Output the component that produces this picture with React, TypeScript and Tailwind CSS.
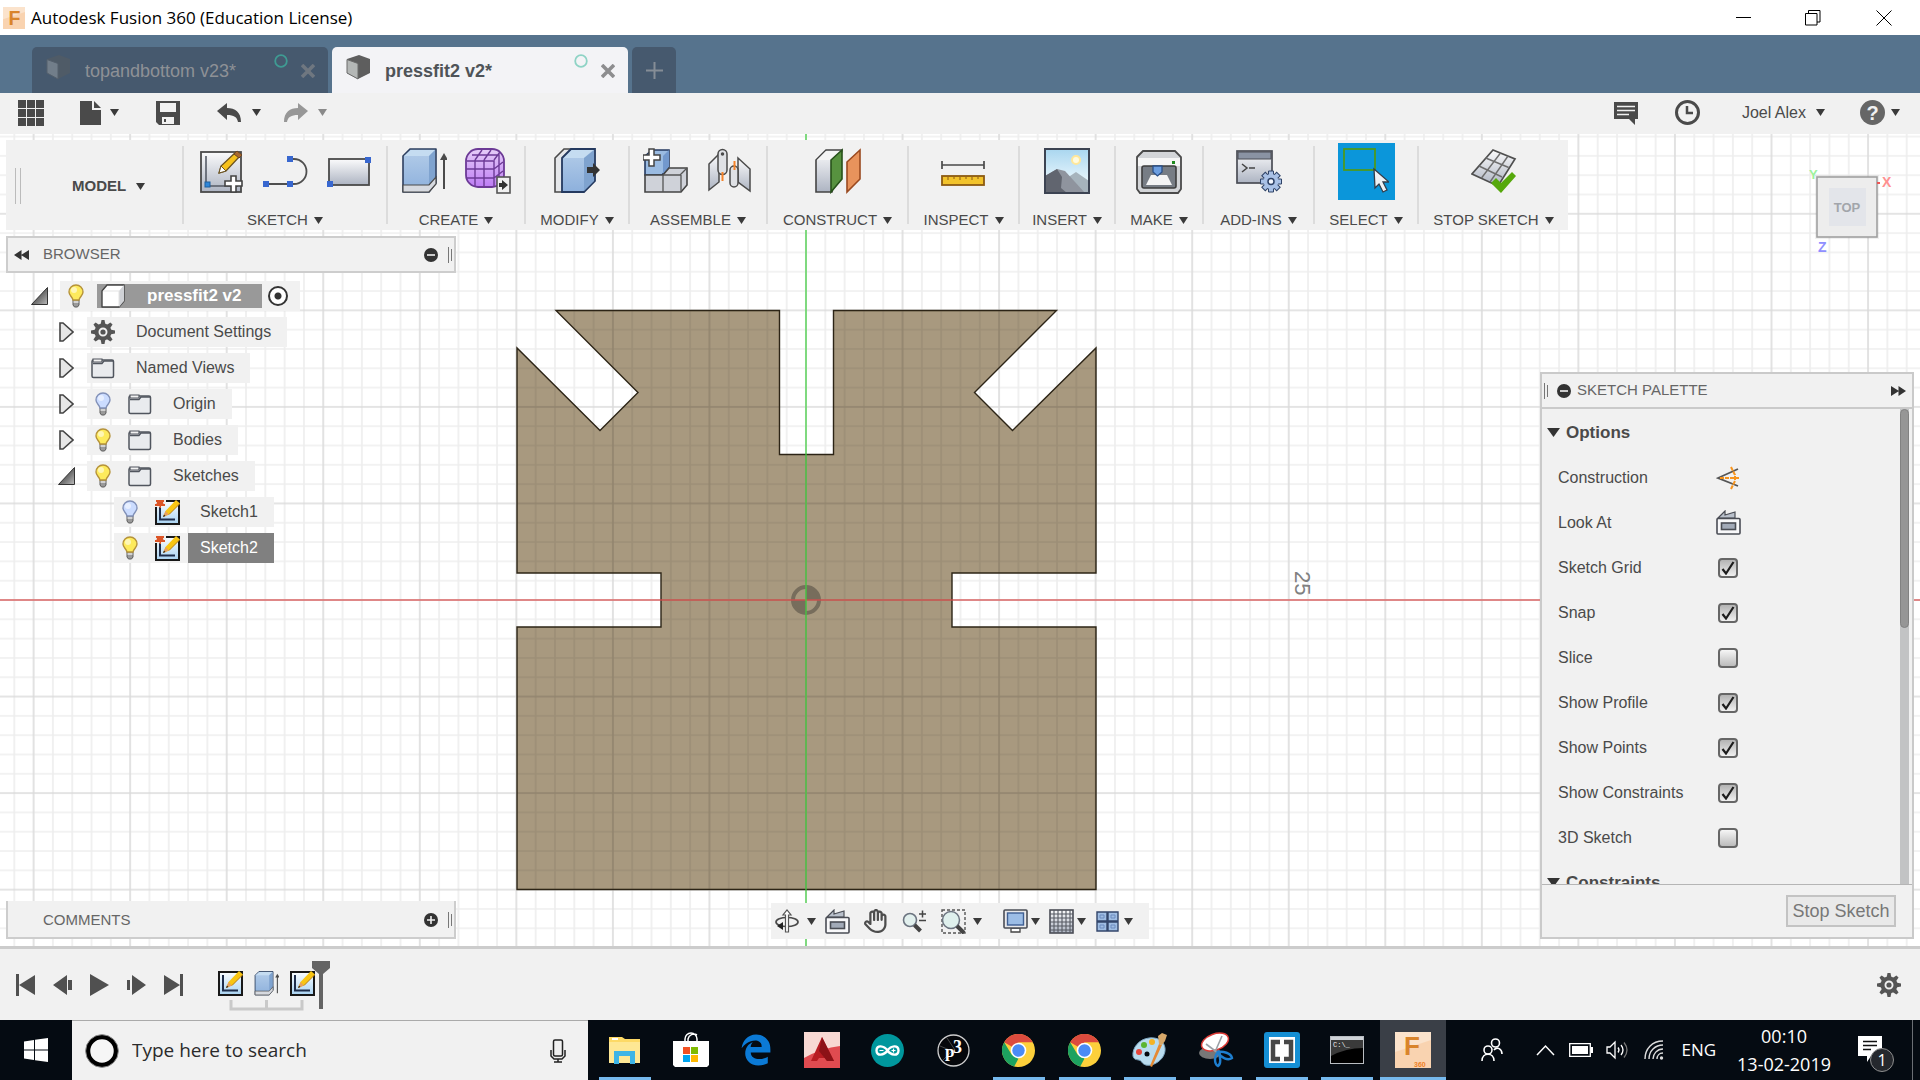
import React, { useState } from 'react';
import { FaEdgeLegacy, FaRegHand } from 'react-icons/fa6';

const INK = '#4a4a4a';

/* ---------- small shared pieces ---------- */

function Caret({ className = 'text-[#3a3a3a]' }: { className?: string }) {
  return (
    <svg width="9" height="7" viewBox="0 0 9 7" className={`shrink-0 ${className}`}>
      <path d="M0 0h9L4.500 7z" fill="currentColor" />
    </svg>
  );
}

function Gear({ size = 24 }: { size?: number }) {
  const teeth = [0, 45, 90, 135, 180, 225, 270, 315];
  return (
    <svg width={size} height={size} viewBox="0 0 24 24">
      {teeth.map((a) => (
        <path key={a} d="M9.500 5 10.500 0h3l1 5z" fill="#555" transform={`rotate(${a} 12 12)`} />
      ))}
      <circle cx="12" cy="12" r="6.500" fill="#f1f1f1" stroke="#555" strokeWidth="4" />
      <circle cx="12" cy="12" r="2.600" fill="#555" />
    </svg>
  );
}

function Bulb({ on }: { on: boolean }) {
  return (
    <svg width="18" height="24" viewBox="0 0 18 24">
      <path d="M6 15h6v6l-1.500 2h-3L6 21z" fill="#9a9a9a" stroke="#5d5d5d" />
      <path d="M6.500 18h5" stroke="#e4e4e4" strokeWidth="1.500" />
      <path
        d="M9 1a7 7 0 0 0-7 7c0 3.500 3.500 5 4 8h6c.5-3 4-4.500 4-8a7 7 0 0 0-7-7z"
        fill={on ? '#fdea5c' : '#cbdcff'}
        stroke={on ? '#b5923a' : '#8291b8'}
        strokeWidth="1.400"
      />
      <ellipse cx="7" cy="6" rx="3" ry="3" fill="#fff" opacity=".55" />
    </svg>
  );
}

function Folder() {
  return (
    <svg width="24" height="22" viewBox="0 0 24 22">
      <rect x="1" y="3" width="21.500" height="17.500" rx="1.500" fill="#e9ebee" stroke="#50555e" strokeWidth="1.500" />
      <path d="M2 6.500h9l2-2.500H22" fill="none" stroke="#50555e" strokeWidth="1.300" />
      <path d="M2 2h9v3H2z" fill="#f1f1f1" stroke="#50555e" strokeWidth="1.200" />
    </svg>
  );
}

function CubeIcon() {
  return (
    <svg width="24" height="24" viewBox="0 0 24 24">
      <path d="M1 7 6 1h17v16l-5 6H1z" fill="#fff" stroke="#444" strokeWidth="1.400" strokeLinejoin="round" />
      <path d="M18 7 23 1v16l-5 6z" fill="#d0d2d6" />
      <path d="M2 7h16v15" fill="none" stroke="#e3e3e3" />
    </svg>
  );
}

function SketchIcon({ pinned = false }: { pinned?: boolean }) {
  return (
    <svg width="25" height="25" viewBox="0 0 25 25">
      <rect x="1" y="1" width="23" height="23" fill="url(#sky)" stroke="#181818" strokeWidth="2" />
      <path d="M5 4v15.500h15" fill="none" stroke="#1e2d4a" strokeWidth="2" />
      <path d="m8 17 2.500-6L21 0l4 3.500L14 14.500z" fill="#f8c513" />
      <path d="m8 17 2.500-6 3.500 3.500z" fill="#e7a15e" />
      <path d="m8 17 1-2.500 1.500 1.500z" fill="#222" />
      <path d="M14 14.500 25 3.500" stroke="#b77a10" />
      {pinned && (
        <>
          <path d="M0 0h11v7H0z" fill="#f1f1f1" />
          <path d="M1 0h8v2H8l.5 2H10v2H6v2H4.500V6H0V4h1.500L2 2H1z" fill="#dc5527" />
        </>
      )}
    </svg>
  );
}

function ExtrudeIcon({ size = 46 }: { size?: number }) {
  return (
    <svg width={size} height={size} viewBox="0 0 46 46">
      <path d="M2 8 9 1h26v34l-7 9H2z" fill="url(#steel)" stroke="#2d3f5f" strokeWidth="1.600" strokeLinejoin="round" />
      <path d="M3 8h25l6-6H10z" fill="#c5dcf1" />
      <path d="M28 8 34 2v32l-6 8z" fill="#7fa3cf" />
      <path d="M2 37h26l7-8v7l-7 8H2z" fill="#d7dae0" stroke="#4a4a4a" strokeWidth="1.200" />
      <path d="M43 9v32" stroke={INK} strokeWidth="2" />
      <path d="m39 12 4-7 4 7z" fill={INK} />
    </svg>
  );
}

function LookAtIcon() {
  return (
    <svg width="25" height="25" viewBox="0 0 25 25">
      <path d="m2 8 7-7v4l10-3v6z" fill="#b9c0cb" stroke="#4a4d55" strokeWidth="1.200" />
      <rect x="1" y="8.500" width="23" height="15.500" rx="1" fill="#f8f8fa" stroke="#4a4d55" strokeWidth="1.600" />
      <rect x="5.500" y="13" width="14" height="6.500" fill="#a2aab8" stroke="#4a4d55" strokeWidth="1.600" />
    </svg>
  );
}

function DoubleArrow({ flip = false }: { flip?: boolean }) {
  return (
    <svg width="15" height="10" viewBox="0 0 15 10" className={flip ? 'rotate-180' : ''}>
      <path d="M0 5 7.500 0v10zM7 5l8-5v10z" fill="#333" />
    </svg>
  );
}

function RoundSign({ plus = false }: { plus?: boolean }) {
  return (
    <svg width="14" height="14" viewBox="0 0 14 14">
      <circle cx="7" cy="7" r="7" fill="#333" />
      <path d={plus ? 'M3 7h8M7 3v8' : 'M3 7h8'} stroke="#f1f1f1" strokeWidth="1.600" />
    </svg>
  );
}

function Grip() {
  return (
    <span className="flex items-center gap-0.5">
      <span className="h-4 w-px bg-[#777]" />
      <span className="h-3 w-px bg-[#777]" />
    </span>
  );
}

function FusionLogo({ size, caption }: { size: number; caption?: boolean }) {
  return (
    <svg width={size} height={size} viewBox="0 0 36 36">
      <rect width="36" height="36" fill="#fbe3cc" />
      <path d="M0 20 36 8v28H0z" fill="#f9d3b0" />
      <text x="9" y={caption ? 23 : 29} fontFamily="Liberation Sans" fontWeight="bold" fontSize={caption ? 26 : 32} fill="#d9842b">F</text>
      {caption && (
        <text x="19" y="35" fontFamily="Liberation Sans" fontSize="7" fontWeight="bold" fill="#ee8127">360</text>
      )}
    </svg>
  );
}

/* ---------- title bar and document tabs ---------- */

function TitleBar() {
  return (
    <header className="flex h-[35px] shrink-0 items-center bg-white pl-[3px] text-black">
      <FusionLogo size={22} />
      <h1 className="ml-[6px] font-['Open_Sans',sans-serif] text-[17px]">Autodesk Fusion 360 (Education License)</h1>
      <div className="ml-auto flex">
        <button aria-label="Minimise" className="flex h-8 w-[69px] items-center justify-center">
          <svg width="16" height="16" viewBox="0 0 16 16"><path d="M0 7.500h15" stroke="#000" /></svg>
        </button>
        <button aria-label="Restore" className="flex h-8 w-[69px] items-center justify-center">
          <svg width="16" height="16" viewBox="0 0 16 16" fill="none" stroke="#000">
            <path d="M.5 3.500h11.500v11.500H.5zM3.500 3.500V.5h11.500v11.500h-3" />
          </svg>
        </button>
        <button aria-label="Close" className="flex h-8 w-[73px] items-center justify-center">
          <svg width="16" height="16" viewBox="0 0 16 16"><path d="m.5.5 15 15m0-15-15 15" stroke="#000" /></svg>
        </button>
      </div>
    </header>
  );
}

function DocTab({ name, active = false }: { name: string; active?: boolean }) {
  return (
    <div
      className={`flex h-[46px] w-[296px] items-center rounded-t-[5px] pl-[14px] pr-[13px] pt-[2px] ${
        active ? 'bg-[#f3f3f6] text-[#4f5358]' : 'bg-[#46596e] text-[#8e9196]'
      }`}
    >
      <svg width="25" height="25" viewBox="0 0 25 25" className={`mb-2 ${active ? '' : 'opacity-40'}`}>
        <path d="M1 4 13 0l11 4v14l-12 6L1 18z" fill="#5e5e5e" />
        <path d="M1 4.500 12 8.500V24L1 18z" fill="#b4b7b6" stroke="#6a6a6a" />
      </svg>
      <button className={`ml-[14px] text-[18px] leading-6 ${active ? 'font-bold' : ''}`}>{name}</button>
      <svg width="14" height="14" viewBox="0 0 14 14" className="mb-5 ml-auto">
        <circle cx="7" cy="7" r="5.800" fill="none" stroke={active ? '#8ed3c5' : '#3f9b93'} strokeWidth="1.800" />
      </svg>
      <button aria-label={`Close ${name}`} className="ml-[13px]">
        <svg width="14" height="14" viewBox="0 0 14 14">
          <path d="m1 1 12 12m0-12L1 13" stroke={active ? '#8d8d8f' : '#6f7780'} strokeWidth="3.600" />
        </svg>
      </button>
    </div>
  );
}

function TabBar() {
  return (
    <nav className="flex h-[58px] shrink-0 items-end gap-1 bg-[#56738d] pl-8">
      <DocTab name="topandbottom v23*" />
      <DocTab name="pressfit2 v2*" active />
      <button aria-label="New tab" className="flex h-[46px] w-11 items-center justify-center rounded-t-[5px] bg-[#46596e]">
        <svg width="17" height="17" viewBox="0 0 17 17"><path d="M0 8.500h17M8.500 0v17" stroke="#858d96" strokeWidth="2" /></svg>
      </button>
    </nav>
  );
}

function UndoArrow({ flip = false }: { flip?: boolean }) {
  return (
    <svg width="25" height="22" viewBox="0 0 25 22" className={flip ? '-scale-x-100' : ''}>
      <path d="M0 9 10 1v5c8 0 14 4 14 14h-3c-1-5-4-7-11-7v5z" fill="currentColor" />
    </svg>
  );
}

function QuickBar() {
  return (
    <div className="flex h-[41px] shrink-0 items-center bg-[#f1f1f1] pb-[2px] pl-[18px] pr-[20px] text-[16px] text-[#4a4a4a]">
      <button aria-label="Data panel">
        <svg width="26" height="26" viewBox="0 0 26 26" fill={INK}>
          {[0, 9, 18].map((y) => [0, 9, 18].map((x) => <rect key={`${x}-${y}`} x={x} y={y} width="8" height="8" />))}
        </svg>
      </button>
      <button aria-label="File" className="ml-[36px] flex items-center gap-[9px]">
        <svg width="21" height="24" viewBox="0 0 21 24" fill={INK}>
          <path d="M0 0h12v9h9v15H0z" />
          <path d="M14 0l7 7h-7z" />
        </svg>
        <Caret />
      </button>
      <button aria-label="Save" className="ml-[37px]">
        <svg width="24" height="24" viewBox="0 0 24 24">
          <path d="M0 0h24v24H3l-3-3z" fill={INK} />
          <path d="M4 2h16v9H4z" fill="#f1f1f1" />
          <path d="M6 16h12v7H6z" fill="#f1f1f1" />
          <path d="M8 18h2v3H8z" fill={INK} />
        </svg>
      </button>
      <button aria-label="Undo" className="ml-[37px] flex items-center gap-[10px]">
        <UndoArrow />
        <Caret />
      </button>
      <button aria-label="Redo" className="ml-[22px] flex items-center gap-[10px] text-[#979797]">
        <UndoArrow flip />
        <Caret className="text-[#8a8a8a]" />
      </button>

      <button aria-label="Comments" className="ml-auto">
        <svg width="24" height="24" viewBox="0 0 24 24">
          <path d="M0 1h24v17h-3v6l-6-6H0z" fill={INK} />
          <path d="M3 5.500h18M3 9.500h18M3 13.500h12" stroke="#f1f1f1" strokeWidth="1.500" />
        </svg>
      </button>
      <button aria-label="Job status" className="ml-[37px]">
        <svg width="25" height="25" viewBox="0 0 25 25" fill="none" stroke={INK}>
          <circle cx="12.500" cy="12.500" r="11" strokeWidth="3" />
          <path d="M12 6v7h6" strokeWidth="2.500" />
        </svg>
      </button>
      <button className="ml-[42px] flex items-center gap-[10px]">
        Joel Alex <Caret />
      </button>
      <button aria-label="Help" className="ml-[35px] flex items-center gap-[6px]">
        <span className="flex size-[25px] items-center justify-center rounded-full bg-[#666] text-[20px] font-bold text-[#f1f1f1]">?</span>
        <Caret />
      </button>
    </div>
  );
}

/* ---------- ribbon ---------- */

const CreateSketch = () => (
  <svg width="46" height="46" viewBox="0 0 46 46">
    <rect x="3" y="4" width="40" height="40" fill="url(#silver)" stroke="#4a4a4a" strokeWidth="1.800" />
    <path d="M8 8v30h32" fill="none" stroke="#555b66" strokeWidth="1.600" />
    <rect x="7" y="34" width="5" height="5" fill="#2f86d8" stroke="#1d5f9e" />
    <path d="m21 25 2-7L38 4l4 4-14 15z" fill="#f6c11c" stroke="#6a5220" strokeWidth="1.300" />
    <path d="m21 25 2-7 5 5z" fill="#fff" stroke="#6a5220" />
    <path d="m36 6 3-3 5 4-3 3z" fill="#a9692f" stroke="#6a4423" />
    <path d="M33 28h5v5h6v5h-6v6h-5v-6h-6v-5h6z" fill="#fff" stroke="#444" strokeWidth="1.600" />
  </svg>
);

const LineTool = () => (
  <svg width="46" height="46" viewBox="0 0 46 46">
    <path d="M4 36h28a12.500 12.500 0 0 0 0-25h-4" fill="none" stroke="#4f4f4f" strokeWidth="1.800" />
    <path d="M1 33h6v6H1zM25 33h6v6h-6zM25 8h6v6h-6z" fill="#3867cf" />
  </svg>
);

const RectTool = () => (
  <svg width="46" height="46" viewBox="0 0 46 46">
    <rect x="3" y="11" width="40" height="26" fill="url(#silver)" stroke="#4a4a4a" strokeWidth="1.800" />
    <path d="M1 33h6v6H1zM39 9h6v6h-6z" fill="#3867cf" />
  </svg>
);

const FormTool = () => (
  <svg width="46" height="46" viewBox="0 0 46 46">
    <rect x="1" y="1" width="38" height="38" rx="12" fill="url(#violet)" stroke="#6c3a96" strokeWidth="1.800" />
    <path d="M2 13h27v26M10 12v26M19 12v26M1 21h28M1 30h28M10 12l7-10M19 12l7-10M29 12l6-8M7 7h27v28M29 21l9-7M29 30l9-7" fill="none" stroke="#6c3a96" strokeWidth="1.400" />
    <rect x="32" y="29" width="13" height="16" fill="#f1f1f1" stroke="#555" strokeWidth="1.600" />
    <path d="M34 35h3v-3l6 5-6 5v-3h-3z" fill="#333" />
  </svg>
);

const PressPull = () => (
  <svg width="46" height="46" viewBox="0 0 46 46">
    <path d="M1 10 10 1h10v34L8 44H1z" fill="#e5e7ea" stroke="#4a4a4a" strokeWidth="1.600" />
    <path d="m8 10 9-9h24v32L30 44H8z" fill="url(#steel)" stroke="#24395f" strokeWidth="1.800" />
    <path d="M10 10h20l9-8H18z" fill="#c5dcf1" />
    <path d="m30 10 10-8v31L30 43z" fill="#7fa3cf" />
    <path d="M33 19h6v-4l7 7-7 7v-4h-6z" fill="#333" />
  </svg>
);

const NewComponent = () => (
  <svg width="46" height="46" viewBox="0 0 46 46">
    <path d="M2 8 9 2h17v17l-7 8H2z" fill="#9abbe2" stroke="#24395f" strokeWidth="1.600" />
    <path d="M20 8 26 2v17l-6 7z" fill="#7298cd" />
    <path d="M2 27h18l6-7h18v17l-6 7H2z" fill="#cfd2d9" stroke="#444" strokeWidth="1.600" />
    <path d="M20 27v17M20 27h17l7-7M38 27v16" fill="none" stroke="#555" strokeWidth="1.300" />
    <path d="M6 1h5v6h6v5h-6v6H6v-6H0V7h6z" fill="#fff" stroke="#444" strokeWidth="1.500" />
  </svg>
);

const Joint = () => (
  <svg width="46" height="46" viewBox="0 0 46 46" stroke="#4a4a4a" strokeWidth="1.500">
    <path d="m2 16 10-10v28L2 42z" fill="url(#silver)" />
    <path d="M11 6a4 4 0 0 1 9 0v16a4 4 0 0 1-9 0z" fill="#dfe1e5" />
    <circle cx="15.500" cy="6" r="1" fill="#444" />
    <path d="m31 10 12 11v22L31 34z" fill="url(#silver)" />
    <path d="M23 22a4 4 0 0 1 8 0v13a4 4 0 0 1-8 0z" fill="#dfe1e5" />
    <path d="M15.500 24v9M27.500 13v9" stroke="#f5832a" strokeWidth="2" />
  </svg>
);

const Plane = () => (
  <svg width="46" height="46" viewBox="0 0 46 46">
    <path d="M1 12 11 2h16L17 44H1z" fill="url(#silver)" stroke="#444" strokeWidth="1.600" />
    <path d="M2 12h14L26 3H11z" fill="#f5f5f5" />
    <path d="M16 12 27 2v29L16 44z" fill="#57923f" stroke="#27521a" strokeWidth="1.600" />
    <path d="M32 14 45 2v29L32 44z" fill="#e8935c" stroke="#9a4a20" strokeWidth="1.600" />
  </svg>
);

const Measure = () => (
  <svg width="46" height="46" viewBox="0 0 46 46">
    <path d="M1 17h42M1 13v8M43 13v8" stroke="#4a4a4a" strokeWidth="1.700" fill="none" />
    <rect x="1" y="28" width="42" height="9" fill="#f2c32c" stroke="#8c5a12" strokeWidth="1.800" />
    <path d="M7 29v3M13 29v2M19 29v3M25 29v2M31 29v3M37 29v2" stroke="#8c5a12" />
  </svg>
);

const InsertImage = () => (
  <svg width="46" height="46" viewBox="0 0 46 46">
    <rect x="1" y="1" width="44" height="44" fill="url(#daylight)" />
    <circle cx="32" cy="12" r="4" fill="#fffbe0" stroke="#ffe79a" strokeWidth="2" />
    <path d="m23 30 9-6 13 9v12H23z" fill="#a6b3bc" />
    <path d="M1 28 13 21l8 2 20 22H1z" fill="#8f949e" />
    <path d="M1 28 13 21l5 8-1 11 6 5H1z" fill="#61656f" />
    <rect x="1" y="1" width="44" height="44" fill="none" stroke="#3c4352" strokeWidth="2" />
  </svg>
);

const Printer3D = () => (
  <svg width="46" height="46" viewBox="0 0 46 46">
    <path d="M1 9 7 3h32l6 6v32l-3 4H4l-3-4z" fill="#d3d5d8" stroke="#4a4a4a" strokeWidth="1.800" />
    <path d="M2 10h42v8H2z" fill="#f6f6f6" />
    <rect x="6" y="18" width="34" height="22" rx="2" fill="#777d85" stroke="#3e3e3e" strokeWidth="1.600" />
    <path d="M15 27h16l5 10H10z" fill="#f4f4f4" />
    <path d="M17 18h9v6l-4.500 4L17 24z" fill="#6c9ee0" stroke="#2c5087" strokeWidth="1.300" />
    <rect x="36" y="13" width="3" height="3" fill="#1f8b1f" />
  </svg>
);

const Scripts = () => (
  <svg width="46" height="46" viewBox="0 0 46 46">
    <rect x="1" y="3" width="35" height="32" fill="url(#silver)" stroke="#4a4d55" strokeWidth="1.700" />
    <path d="M2 4h33v7H2z" fill="#8a93a3" stroke="#4a4d55" />
    <path d="m6 16 5 4-5 4M13 20h6" fill="none" stroke="#444" strokeWidth="1.500" />
    {[0, 45, 90, 135].map((a) => (
      <path key={a} d="M32.500 23h5v21h-5z" fill="#a9c1e6" stroke="#2f4367" transform={`rotate(${a} 35 33.500)`} />
    ))}
    <circle cx="35" cy="33.500" r="7.500" fill="#a9c1e6" />
    <circle cx="35" cy="33.500" r="3" fill="#f5f8ff" stroke="#2f4367" strokeWidth="1.500" />
  </svg>
);

const SelectTool = () => (
  <span className="flex size-[57px] items-center justify-center bg-[#0b96da]">
    <svg width="46" height="46" viewBox="0 0 46 46">
      <rect x="1" y="1" width="31" height="21" fill="none" stroke="#4d9a1e" strokeWidth="1.800" />
      <path d="m31 21 1 19 4-4 4 8 4-2-4-8h6z" fill="#eef1f4" stroke="#333c48" strokeWidth="1.300" />
    </svg>
  </span>
);

const StopSketchTool = () => (
  <svg width="46" height="46" viewBox="0 0 46 46">
    <path d="M22 2 44 11 27 38 1 26z" fill="url(#silver)" stroke="#4f4f4f" strokeWidth="1.700" />
    <path d="m14.700 10 23 9.500M8 18l23 11M29.500 5 10.500 30M37 8 19 34" stroke="#6d6d6d" strokeWidth="1.400" />
    <path d="m20 35 5-5 5 5L41 24l4 4-15 17z" fill="#56a80c" />
  </svg>
);

type RibbonGroup = { label: string; width: string; tools: { name: string; icon: React.ReactNode }[] };

const ribbon: RibbonGroup[] = [
  {
    label: 'SKETCH',
    width: 'w-[204px]',
    tools: [
      { name: 'Create Sketch', icon: <CreateSketch /> },
      { name: 'Line', icon: <LineTool /> },
      { name: 'Rectangle', icon: <RectTool /> },
    ],
  },
  {
    label: 'CREATE',
    width: 'w-[138px]',
    tools: [
      { name: 'Extrude', icon: <ExtrudeIcon /> },
      { name: 'Create Form', icon: <FormTool /> },
    ],
  },
  { label: 'MODIFY', width: 'w-[104px]', tools: [{ name: 'Press Pull', icon: <PressPull /> }] },
  {
    label: 'ASSEMBLE',
    width: 'w-[138px]',
    tools: [
      { name: 'New Component', icon: <NewComponent /> },
      { name: 'Joint', icon: <Joint /> },
    ],
  },
  { label: 'CONSTRUCT', width: 'w-[141px]', tools: [{ name: 'Offset Plane', icon: <Plane /> }] },
  { label: 'INSPECT', width: 'w-[111px]', tools: [{ name: 'Measure', icon: <Measure /> }] },
  { label: 'INSERT', width: 'w-[96px]', tools: [{ name: 'Attached Canvas', icon: <InsertImage /> }] },
  { label: 'MAKE', width: 'w-[88px]', tools: [{ name: '3D Print', icon: <Printer3D /> }] },
  { label: 'ADD-INS', width: 'w-[111px]', tools: [{ name: 'Scripts', icon: <Scripts /> }] },
  { label: 'SELECT', width: 'w-[104px]', tools: [{ name: 'Select', icon: <SelectTool /> }] },
  { label: 'STOP SKETCH', width: 'w-[151px]', tools: [{ name: 'Stop Sketch', icon: <StopSketchTool /> }] },
];

function Ribbon() {
  return (
    <div className="ml-[6px] flex h-[90px] w-fit bg-[#f1f1f1] text-[15px] leading-4 text-[#4a4a4a]">
      <div className="flex w-[176px] items-center pl-[9px] pt-[2px]">
        <span className="h-9 w-1.5 border-x border-[#bbb]" />
        <button className="ml-[51px] flex items-center gap-[10px] font-bold">
          MODEL <Caret />
        </button>
      </div>
      {ribbon.map((group) => (
        <div key={group.label} className={`my-[6px] flex flex-col items-center border-l-2 border-[#dcdcdc] ${group.width}`}>
          <div className="mt-[2px] flex h-[46px] shrink-0 items-center gap-[18px]">
            {group.tools.map((tool) => (
              <button key={tool.name} aria-label={tool.name}>{tool.icon}</button>
            ))}
          </div>
          <button className="mt-[18px] flex shrink-0 items-center gap-[6px] whitespace-nowrap">
            {group.label} <Caret />
          </button>
        </div>
      ))}
    </div>
  );
}

/* ---------- browser tree ---------- */

type Node = {
  name: string;
  level: number;
  state?: 'open' | 'closed';
  bulb?: boolean;
  icon: React.ReactNode;
  root?: boolean;
  selected?: boolean;
};

const nodes: Node[] = [
  { name: 'pressfit2 v2', level: 0, state: 'open', bulb: true, icon: <CubeIcon />, root: true },
  { name: 'Document Settings', level: 1, state: 'closed', icon: <Gear /> },
  { name: 'Named Views', level: 1, state: 'closed', icon: <Folder /> },
  { name: 'Origin', level: 1, state: 'closed', bulb: false, icon: <Folder /> },
  { name: 'Bodies', level: 1, state: 'closed', bulb: true, icon: <Folder /> },
  { name: 'Sketches', level: 1, state: 'open', bulb: true, icon: <Folder /> },
  { name: 'Sketch1', level: 2, bulb: false, icon: <SketchIcon pinned /> },
  { name: 'Sketch2', level: 2, bulb: true, icon: <SketchIcon pinned />, selected: true },
];

const indent = ['pl-[25px]', 'pl-[52px]', 'pl-[79px]'];

function Expander({ state }: { state?: 'open' | 'closed' }) {
  if (!state) return <span className="w-[17px]" />;
  return (
    <button aria-label={state === 'open' ? 'Collapse' : 'Expand'} className="flex w-[17px] justify-center">
      {state === 'open' ? (
        <svg width="17" height="18" viewBox="0 0 17 18">
          <path d="M16.500.5v17H.5z" fill="url(#dusk)" stroke="#333" />
        </svg>
      ) : (
        <svg width="15" height="20" viewBox="0 0 15 20">
          <path d="M1 1h3l10 9L4 19H1z" fill="#e6e6e6" stroke="#444" strokeWidth="1.600" />
        </svg>
      )}
    </button>
  );
}

function TreeRow({ node }: { node: Node }) {
  return (
    <li className={`flex h-[30px] items-center gap-3 ${indent[node.level]}`}>
      <Expander state={node.state} />
      <div className="flex h-full items-center bg-[#f1f1f1]">
        {node.bulb !== undefined && (
          <button aria-label={`Toggle ${node.name}`} className="mr-[5px] flex w-8 justify-center">
            <Bulb on={node.bulb} />
          </button>
        )}
        {node.root ? (
          <>
            <span className="flex h-6 items-center bg-[#999] pr-[20px] text-[17px] font-bold text-white">
              <span className="mr-[18px] flex w-8 justify-center">{node.icon}</span>
              {node.name}
            </span>
            <input
              type="radio"
              name="active"
              defaultChecked
              aria-label="Activate"
              className="ml-[6px] mr-3 size-5 appearance-none rounded-full border-2 border-[#333] bg-[radial-gradient(circle,#333_3px,#fff_4px)]"
            />
          </>
        ) : (
          <>
            <span className="mr-[5px] flex w-8 justify-center">{node.icon}</span>
            <span className={`flex h-full items-center pl-3 pr-4 ${node.selected ? 'bg-[#808080] text-white' : ''}`}>
              {node.name}
            </span>
          </>
        )}
      </div>
    </li>
  );
}

function Browser() {
  return (
    <section className="mt-[6px] text-[16px] text-[#4a4a4a]">
      <div className="flex h-[37px] items-center border-2 border-[#cdcdcd] bg-[#f1f1f1] pl-[6px] pr-[2px]">
        <button aria-label="Collapse browser"><DoubleArrow /></button>
        <h2 className="ml-[14px] text-[15px] text-[#666]">BROWSER</h2>
        <button aria-label="Minimise browser" className="ml-auto mr-[10px]"><RoundSign /></button>
        <Grip />
      </div>
      <ul className="mt-2 flex flex-col gap-[6px]">
        {nodes.map((node) => <TreeRow key={node.name} node={node} />)}
      </ul>
    </section>
  );
}

function Comments() {
  return (
    <section className="mt-auto flex h-[38px] items-center border-2 border-t-0 border-[#cdcdcd] bg-[#f1f1f1] pl-[35px] pr-[2px] pt-[2px]">
      <h2 className="text-[15px] text-[#666]">COMMENTS</h2>
      <button aria-label="Expand comments" className="ml-auto mr-[10px]"><RoundSign plus /></button>
      <Grip />
    </section>
  );
}

/* ---------- navigation bar ---------- */

function NavBar() {
  return (
    <div className="flex h-9 items-center self-end bg-[#f1f1f1] pl-1 pr-4">
      <button aria-label="Orbit" className="flex items-center gap-2">
        <svg width="24" height="24" viewBox="0 0 24 24">
          <ellipse cx="12" cy="13" rx="11" ry="4.500" fill="none" stroke="#4a4a4a" strokeWidth="1.700" />
          <path d="M10.500 23V6H8l4-5 4 5h-2.500v17z" fill="#fff" stroke="#555" strokeWidth="1.200" />
          <path d="m2 17 6-4v8z" fill="#222" />
        </svg>
        <Caret />
      </button>
      <button aria-label="Look at" className="ml-[9px]"><LookAtIcon /></button>
      <button aria-label="Pan" className="ml-[14px] text-[#4d4d4d]"><FaRegHand size={24} /></button>
      <button aria-label="Zoom" className="ml-[14px]">
        <svg width="25" height="25" viewBox="0 0 25 25">
          <circle cx="8" cy="11" r="6.500" fill="#e2f0ee" stroke="#6c7480" strokeWidth="1.600" />
          <path d="m12.500 16 6 6" stroke="#444" strokeWidth="4" />
          <path d="M17 5h7M20.500 1.500v7M17 11.500h7" stroke="#444" strokeWidth="1.500" />
        </svg>
      </button>
      <button aria-label="Zoom window" className="ml-[14px] flex items-center gap-[7px]">
        <svg width="25" height="25" viewBox="0 0 25 25">
          <rect x="1" y="1" width="23" height="23" fill="none" stroke="#555" strokeWidth="1.400" strokeDasharray="3 2" />
          <circle cx="10" cy="11" r="8.500" fill="#dff0ed" stroke="#6c7480" strokeWidth="1.500" />
          <path d="m16 17 7 7" stroke="#444" strokeWidth="4" />
        </svg>
        <Caret />
      </button>
      <button aria-label="Display settings" className="ml-[21px] flex items-center gap-[3px]">
        <svg width="25" height="25" viewBox="0 0 25 25">
          <path d="M8 19h9v4H8z" fill="#fff" stroke="#444" strokeWidth="1.300" />
          <rect x="1" y="1" width="23" height="18" rx="1" fill="#e8e8ea" stroke="#4a4d55" strokeWidth="1.600" />
          <rect x="4.500" y="4" width="16" height="12" fill="#9cbde6" stroke="#3f5f93" strokeWidth="1.400" />
        </svg>
        <Caret />
      </button>
      <button aria-label="Grid and snaps" className="ml-[9px] flex items-center gap-[3px]">
        <svg width="25" height="25" viewBox="0 0 25 25">
          <rect x="1" y="1" width="23" height="23" fill="url(#silver)" stroke="#4a4d55" strokeWidth="1.600" />
          <path d="M5 1v23M9 1v23M13 1v23M17 1v23M21 1v23M1 5h23M1 9h23M1 13h23M1 17h23M1 21h23" stroke="#555962" strokeWidth="1.100" />
        </svg>
        <Caret />
      </button>
      <button aria-label="Viewports" className="ml-[10px] flex items-center gap-[5px]">
        <svg width="23" height="21" viewBox="0 0 23 21" fill="#9fbde3" stroke="#33466b" strokeWidth="1.400">
          <path d="M1 1h10v9H1zM12 1h10v9H12zM1 11h10v9H1zM12 11h10v9H12z" />
          <path d="M4 4h4v3H4zM15 4h4v3h-4zM4 14h4v3H4zM15 14h4v3h-4z" stroke="#6c8cc0" strokeWidth="1" />
        </svg>
        <Caret />
      </button>
    </div>
  );
}

/* ---------- sketch palette ---------- */

const toggles = [
  { name: 'Sketch Grid', on: true },
  { name: 'Snap', on: true },
  { name: 'Slice', on: false },
  { name: 'Show Profile', on: true },
  { name: 'Show Points', on: true },
  { name: 'Show Constraints', on: true },
  { name: '3D Sketch', on: false },
];

function PaletteHeading({ children }: { children: React.ReactNode }) {
  return (
    <h3 className="flex h-[45px] items-center gap-[6px] pl-[5px] text-[17px] font-bold">
      <svg width="13" height="9" viewBox="0 0 13 9"><path d="M0 0h13L6.500 9z" fill="#333" /></svg>
      {children}
    </h3>
  );
}

function PaletteToggle({ name, on }: { name: string; on: boolean }) {
  const [checked, setChecked] = useState(on);
  return (
    <label className="flex h-[45px] items-center pl-4">
      <span className="w-[158px]">{name}</span>
      <span className="grid w-6 place-items-center">
        <input
          type="checkbox"
          checked={checked}
          onChange={() => setChecked(!checked)}
          className="size-5 appearance-none rounded-[4px] border-2 border-[#666] bg-linear-to-b from-[#f6f6f6] to-[#bcbcbc] [grid-area:1/1] checked:from-[#b4b4b4] checked:to-[#f0f0f0]"
        />
        {checked && (
          <svg width="14" height="14" viewBox="0 0 14 14" className="pointer-events-none [grid-area:1/1]">
            <path d="m1.500 8 3.500 4.500L12.500 1" fill="none" stroke="#1c1c1c" strokeWidth="2.200" />
          </svg>
        )}
      </span>
    </label>
  );
}

function SketchPalette() {
  return (
    <section className="flex h-[567px] w-[374px] flex-col self-end justify-self-end border-2 border-[#cacaca] bg-[#f1f1f1] text-[16px] text-[#4a4a4a]">
      <div className="flex h-[35px] shrink-0 items-center border-b-2 border-[#cacaca] pl-[2px] pr-[6px]">
        <Grip />
        <button aria-label="Minimise palette" className="ml-[9px]"><RoundSign /></button>
        <h2 className="ml-[6px] text-[15px] text-[#666]">SKETCH PALETTE</h2>
        <button aria-label="Collapse palette" className="ml-auto"><DoubleArrow flip /></button>
      </div>
      <div className="flex min-h-0 flex-1">
        <div className="flex-1 overflow-hidden pt-px">
          <PaletteHeading>Options</PaletteHeading>
          <div className="flex h-[45px] items-center pl-4">
            <span className="w-[158px]">Construction</span>
            <button aria-label="Construction">
              <svg width="24" height="24" viewBox="0 0 24 24">
                <path d="M22 3 2 12l20 8" fill="none" stroke="#555" strokeWidth="1.800" />
                <path d="M4 12h20M15 1l4 8v6l-4 8" fill="none" stroke="#f7941d" strokeWidth="2" strokeDasharray="4 1" />
              </svg>
            </button>
          </div>
          <div className="flex h-[45px] items-center pl-4">
            <span className="w-[158px]">Look At</span>
            <button aria-label="Look At"><LookAtIcon /></button>
          </div>
          {toggles.map((t) => <PaletteToggle key={t.name} {...t} />)}
          <PaletteHeading>Constraints</PaletteHeading>
        </div>
        <div className="mr-[3px] w-[9px] bg-[#c2c3c4]">
          <div className="h-[46%] rounded-full border border-[#828282] bg-[#969696]" />
        </div>
      </div>
      <div className="flex h-[53px] shrink-0 items-center justify-end border-t border-[#b5b5b5] pr-4">
        <button className="h-8 w-[110px] border-2 border-[#c3c3c3] bg-[#e9e9e9] text-[18px] leading-6 text-[#777]">Stop Sketch</button>
      </div>
    </section>
  );
}

/* ---------- modelling canvas ---------- */

const PROFILE =
  'M556 310.500H779.500V454.500H833.500V310.500H1056.500L974.500 392.500 1012.500 430.500 1096 348V573H952V627H1096V889.500H517V627H661V573H517V348L600 430.500 638 392.500Z';

function ModelCanvas() {
  return (
    <svg className="absolute inset-0 size-full bg-white" viewBox="0 134 1920 812" preserveAspectRatio="xMidYMid slice">
      <defs>
        <linearGradient id="silver" x1="0" y1="0" x2="0" y2="1">
          <stop offset="0" stopColor="#fbfbfc" />
          <stop offset="1" stopColor="#adb4c2" />
        </linearGradient>
        <linearGradient id="steel" x1="0" y1="0" x2="0" y2="1">
          <stop offset="0" stopColor="#b4cde9" />
          <stop offset="1" stopColor="#8db0dc" />
        </linearGradient>
        <linearGradient id="sky" x1="0" y1="0" x2="0" y2="1">
          <stop offset="0" stopColor="#fafdff" />
          <stop offset="1" stopColor="#a9d3f2" />
        </linearGradient>
        <linearGradient id="daylight" x1="0" y1="0" x2="0" y2="1">
          <stop offset="0" stopColor="#a9d6ef" />
          <stop offset=".7" stopColor="#e4f4fc" />
        </linearGradient>
        <linearGradient id="violet" x1="0" y1="0" x2="0" y2="1">
          <stop offset="0" stopColor="#e6cdf8" />
          <stop offset="1" stopColor="#bd7cf4" />
        </linearGradient>
        <linearGradient id="dusk" x1="0" y1="0" x2="1" y2="1">
          <stop offset=".4" stopColor="#555" />
          <stop offset="1" stopColor="#bbb" />
        </linearGradient>
        <pattern id="minor" x="806" y="600" width="19.310" height="19.310" patternUnits="userSpaceOnUse">
          <path d="M0 0v19.310M0 0h19.310M19.310 0v19.310M0 19.310h19.310" stroke="#000" strokeOpacity=".065" strokeWidth="1.600" fill="none" />
        </pattern>
        <pattern id="major" x="806" y="600" width="96.550" height="96.550" patternUnits="userSpaceOnUse">
          <path d="M0 0v96.550M0 0h96.550M96.550 0v96.550M0 96.550h96.550" stroke="#000" strokeOpacity=".08" strokeWidth="1.400" fill="none" />
        </pattern>
      </defs>

      <path d={PROFILE} fill="#a8997f" />
      <rect x="0" y="134" width="1920" height="812" fill="url(#minor)" />
      <rect x="0" y="134" width="1920" height="812" fill="url(#major)" />
      <path d={PROFILE} fill="none" stroke="#2c2416" strokeWidth="1.400" />

      {/* origin marker */}
      <circle cx="806" cy="600" r="13" fill="none" stroke="#776d5c" strokeWidth="4" />
      <path d="M806 600v-12a12 12 0 0 1 12 12zM806 600v12a12 12 0 0 1-12-12z" fill="#776d5c" />

      <path d="M0 600h1920" stroke="#dc4a4a" strokeOpacity=".8" strokeWidth="1.500" />
      <path d="M806 134v812" stroke="#3fd43f" strokeOpacity=".8" strokeWidth="1.500" />
      <text transform="translate(1295 571) rotate(90)" fontFamily="Liberation Sans" fontSize="22" fill="#808080">25</text>
    </svg>
  );
}

function ViewCube() {
  return (
    <svg width="90" height="98" viewBox="0 -8 90 98" className="absolute right-6 top-[26px]" fontFamily="Liberation Sans">
      <rect x="9" y="7" width="64" height="64" fill="#000" opacity=".06" />
      <rect x="11" y="9" width="60" height="60" fill="#ededed" stroke="#a0a0a0" strokeWidth="1.600" />
      <rect x="23" y="20" width="37" height="38" fill="#e3e5ea" />
      <text x="41" y="44" textAnchor="middle" fontSize="13" fontWeight="bold" fill="#a2a5ab">TOP</text>
      <text x="3" y="11" fontSize="13" fontWeight="bold" fill="#9df29d">Y</text>
      <text x="76" y="19" fontSize="14" fontWeight="bold" fill="#ff9090">X</text>
      <path d="M71 15h3" stroke="#e55" strokeWidth="2" />
      <text x="12" y="84" fontSize="14" fontWeight="bold" fill="#8f8fff">Z</text>
    </svg>
  );
}

/* ---------- timeline ---------- */

const transport = [
  { name: 'Go to start', d: 'M0 0h3v22H0zM3 11 19 1v20z' },
  { name: 'Step back', d: 'M0 11 14 1v20zM15 6h4v10h-4z' },
  { name: 'Play', d: 'M0 0 19 11 0 22z' },
  { name: 'Step forward', d: 'M0 6h3v10H0zM5 1l14 10L5 21z' },
  { name: 'Go to end', d: 'M0 1l16 10L0 21zM16 0h3v22h-3z' },
];

function Timeline() {
  return (
    <div className="flex h-[74px] shrink-0 items-center border-t-[3px] border-[#ccc] bg-[#f1f1f1] pl-4 pr-[19px]">
      <div className="flex gap-[18px]">
        {transport.map((b) => (
          <button key={b.name} aria-label={b.name}>
            <svg width="19" height="22" viewBox="0 0 19 22"><path d={b.d} fill="#505050" /></svg>
          </button>
        ))}
      </div>
      <div className="ml-[35px] flex flex-col pt-[15px]">
        <div className="flex gap-[11px]">
          <button aria-label="Sketch1 feature"><SketchIcon /></button>
          <button aria-label="Extrude feature"><ExtrudeIcon size={25} /></button>
          <button aria-label="Sketch2 feature"><SketchIcon /></button>
        </div>
        <svg width="97" height="15" viewBox="0 0 97 15" className="mt-[2px]">
          <path d="M13 2v9h71V2M48.500 2v9" fill="none" stroke="#c9c9c9" strokeWidth="3" />
        </svg>
      </div>
      <svg width="18" height="48" viewBox="0 0 18 48" className="-ml-[3px]">
        <path d="M0 0h18v7l-7 6v35H7V13L0 7z" fill="#646464" />
      </svg>
      <button aria-label="Timeline settings" className="ml-auto"><Gear /></button>
    </div>
  );
}

/* ---------- Windows taskbar ---------- */

const Chrome = () => (
  <svg width="33" height="33" viewBox="0 0 33 33">
    <circle cx="16.500" cy="16.500" r="16.500" fill="#fdd03b" />
    <path d="M16.500 16.500 2.200 8.200A16.500 16.500 0 0 1 30.800 8.200H16.500z" fill="#dc4b3e" />
    <path d="M2.200 8.200 9.500 20.500l7 4-4.300 8A16.500 16.500 0 0 1 2.200 8.200z" fill="#1da260" />
    <circle cx="16.500" cy="16.500" r="7.800" fill="#fff" />
    <circle cx="16.500" cy="16.500" r="6.200" fill="#4b8bf5" />
  </svg>
);

type App = { name: string; open?: boolean; active?: boolean; icon: React.ReactNode };

const apps: App[] = [
  {
    name: 'File Explorer',
    open: true,
    icon: (
      <svg width="32" height="28" viewBox="0 0 32 28">
        <path d="M0 1h13l3 2h15v24H0z" fill="#fdd966" />
        <path d="M0 6h31v21H0z" fill="#fee794" />
        <path d="M3 2h6v2H3z" fill="#fff" />
        <path d="M5 15h21v13h-5v-8H10v8H5z" fill="#3db4e6" />
      </svg>
    ),
  },
  {
    name: 'Store',
    icon: (
      <svg width="36" height="36" viewBox="0 0 36 36">
        <path d="M12 10V7a6 6 0 0 1 12 0v3M15 10V7a6 6 0 0 1 9-4" fill="none" stroke="#fff" strokeWidth="1.500" />
        <path d="M0 9h36v24l-2 2H2l-2-2z" fill="#fff" />
        <path d="M10 15h7v7h-7z" fill="#f25022" />
        <path d="M18 15h7v7h-7z" fill="#7fba00" />
        <path d="M10 23h7v7h-7z" fill="#00a4ef" />
        <path d="M18 23h7v7h-7z" fill="#ffb900" />
      </svg>
    ),
  },
  { name: 'Edge', icon: <FaEdgeLegacy size={32} className="text-[#0b7ad6]" /> },
  {
    name: 'AutoCAD',
    icon: (
      <svg width="36" height="36" viewBox="0 0 36 36">
        <rect width="36" height="36" fill="#e04b50" />
        <path d="M0 0h36v14Q18 16 0 26z" fill="#f8d9d3" />
        <path d="M18 5 30 29h-7l-2-3h-6l-2 3H7z" fill="#b81c22" />
        <path d="m18 5 12 24h-7l-8-10z" fill="#8d1217" />
      </svg>
    ),
  },
  {
    name: 'Arduino',
    icon: (
      <svg width="33" height="33" viewBox="0 0 33 33" fill="none" stroke="#fff">
        <circle cx="16.500" cy="16.500" r="16.500" fill="#00979d" stroke="none" />
        <path d="M16.500 16.500C13 11.500 5.500 10.500 5.500 16.500s7.500 5 11 0 11-6 11 0-7.500 5-11 0z" strokeWidth="2.400" />
        <path d="M8.500 16.500h4M20.500 16.500h4M22.500 14.500v4" strokeWidth="1.200" />
      </svg>
    ),
  },
  {
    name: 'Processing',
    icon: (
      <svg width="33" height="33" viewBox="0 0 33 33" fontFamily="Liberation Serif" fontWeight="bold">
        <circle cx="16.500" cy="16.500" r="15.500" fill="#05070b" stroke="#cfcfcf" strokeWidth="1.300" />
        <path d="M3 12l12 5-9 9M10 4l8 12" stroke="#555" strokeWidth=".8" fill="none" />
        <text x="8" y="23" fontSize="17" fill="#fff">p</text>
        <text x="16" y="19" fontSize="18" fill="#fff">3</text>
      </svg>
    ),
  },
  { name: 'Chrome', open: true, icon: <Chrome /> },
  { name: 'Chrome profile', open: true, icon: <Chrome /> },
  {
    name: 'Paint',
    open: true,
    icon: (
      <svg width="36" height="36" viewBox="0 0 36 36">
        <path d="M17 6C7 7 0 16 1 24c1 5 6 3 8 5 2 3 4 5 10 4 9-2 15-10 14-17S26 5 17 6z" fill="#b9dcef" stroke="#7fa8c2" />
        <circle cx="7" cy="20" r="3" fill="#e8463a" />
        <circle cx="12" cy="13" r="3" fill="#5bb531" />
        <circle cx="20" cy="10" r="3" fill="#f5b323" />
        <circle cx="15" cy="22" r="2.500" fill="#05090f" />
        <path d="m18 34 9-22 3 1-10 22z" fill="#e58a34" />
        <path d="m27 12-1-8 4-3 5 2-2 6-3 4z" fill="#d7a86a" />
      </svg>
    ),
  },
  {
    name: 'Snipping Tool',
    open: true,
    icon: (
      <svg width="36" height="36" viewBox="0 0 36 36">
        <ellipse cx="12" cy="21" rx="11" ry="6" fill="#777" />
        <ellipse cx="17" cy="10" rx="14" ry="8" fill="#fff" stroke="#dc3a35" strokeWidth="1.500" transform="rotate(-20 17 10)" />
        <path d="m8 12 12 9M24 4 17 20" stroke="#9aa0a6" strokeWidth="1.600" />
        <path d="M20 20c-4 4-4 12 0 14 3-2 3-9 0-14zM20 20c5-1 13 1 14 6-4 3-11 0-14-6z" fill="none" stroke="#1e7fd0" strokeWidth="2.400" />
      </svg>
    ),
  },
  {
    name: 'Brackets',
    open: true,
    icon: (
      <svg width="36" height="36" viewBox="0 0 36 36">
        <rect width="36" height="36" rx="3" fill="#158fd4" />
        <rect x="5" y="5" width="26" height="26" fill="#fff" />
        <path d="M16 10H9v17h7M20 10h7v17h-7" fill="none" stroke="#474747" strokeWidth="4.500" />
      </svg>
    ),
  },
  {
    name: 'Command Prompt',
    open: true,
    icon: (
      <svg width="34" height="28" viewBox="0 0 34 28">
        <rect x=".5" y=".5" width="33" height="27" fill="#000" stroke="#b9bdc2" />
        <path d="M1 1h32v3H1z" fill="#cfd3d8" />
        <path d="M1 4h32v8Q16 12 1 20z" fill="#3a3a3a" />
        <text x="3" y="11" fontFamily="Liberation Mono" fontSize="7" fill="#eee">C:\_</text>
      </svg>
    ),
  },
  { name: 'Fusion 360', open: true, active: true, icon: <FusionLogo size={36} caption /> },
];

function Taskbar() {
  return (
    <footer className="flex h-[60px] shrink-0 items-stretch bg-[#050b12] font-['Open_Sans',sans-serif] text-white">
      <button aria-label="Start" className="flex w-[72px] items-center justify-center">
        <svg width="24" height="24" viewBox="0 0 24 24" fill="#fff">
          <path d="M0 3.500 10 2v9.500H0zM11 1.800 24 0v11.500H11zM0 12.500h10V22L0 20.500zM11 12.500h13V24l-13-1.800z" />
        </svg>
      </button>
      <form className="flex w-[516px] items-center border-t border-[#aaa] bg-[#f1f1f1] pl-[13px] pr-[22px]">
        <svg width="34" height="34" viewBox="0 0 34 34">
          <circle cx="17" cy="17" r="14" fill="#f6f6f6" stroke="#000" strokeWidth="4.500" />
          <circle cx="17" cy="17" r="16.400" fill="none" stroke="#8a8a8a" />
        </svg>
        <input
          type="text"
          aria-label="Search"
          placeholder="Type here to search"
          className="ml-[13px] min-w-0 flex-1 bg-transparent text-[19px] text-black outline-none placeholder:text-[#2b2b2b]"
        />
        <button type="button" aria-label="Voice search">
          <svg width="16" height="24" viewBox="0 0 16 24" fill="none" stroke="#222" strokeWidth="1.500">
            <rect x="3.500" y="1" width="9" height="16" rx="1.500" />
            <path d="M1 11v6l3 3h8l3-3v-6M8 20v3M4 23h8" />
          </svg>
        </button>
      </form>
      <div className="ml-1 flex w-[854px]">
        {apps.map((app) => (
          <button
            key={app.name}
            aria-label={app.name}
            className={`flex flex-1 flex-col items-center ${app.active ? 'bg-[#3a3f47]' : ''}`}
          >
            <span className="flex h-[57px] items-center pt-[3px]">{app.icon}</span>
            {app.open && <span className={`h-[3px] bg-[#76b9ed] ${app.active ? 'w-full' : 'w-[52px]'}`} />}
          </button>
        ))}
      </div>
      <div className="ml-auto flex items-center">
        <button aria-label="People">
          <svg width="22" height="24" viewBox="0 0 22 24" fill="none" stroke="#fff" strokeWidth="1.600">
            <circle cx="14.500" cy="5" r="4" />
            <circle cx="7" cy="12" r="4" />
            <path d="M1 23c0-9 12-9 12 0M13 12c3-4 8-1 8 4" />
          </svg>
        </button>
        <button aria-label="Show hidden icons" className="ml-[33px]">
          <svg width="19" height="12" viewBox="0 0 19 12"><path d="m1 11 8.500-9 8.500 9" fill="none" stroke="#fff" strokeWidth="1.500" /></svg>
        </button>
        <svg width="24" height="14" viewBox="0 0 24 14" className="ml-[14px]">
          <path d="M.7.7h20.600v12.600H.7z" fill="none" stroke="#fff" strokeWidth="1.300" />
          <path d="M3 3h16v8H3zM22 4h2v6h-2z" fill="#fff" />
        </svg>
        <svg width="23" height="20" viewBox="0 0 23 20" className="ml-[13px]" fill="none" stroke="#fff" strokeWidth="1.300">
          <path d="M1 7h3l5-5v16l-5-5H1z" />
          <path d="M12 7.500q2 2.500 0 5M15 5q4 5 0 10" />
          <path d="M18 2.500q6 7.500 0 15" stroke="#777" />
        </svg>
        <svg width="20" height="20" viewBox="0 0 20 20" className="ml-[15px]" fill="none" stroke="#ddd" strokeWidth="1.400">
          <path d="M1 19C1 9 8 1 19 1M5 19C5 11 11 5 19 5M9 19c0-5 4-10 10-10M13 19c0-3 2-6 6-6" />
          <circle cx="17.500" cy="18" r="1" fill="#fff" />
        </svg>
        <span className="ml-[17px] text-[17px]">ENG</span>
        <time className="ml-[21px] flex flex-col text-center text-[18px] leading-7">
          <span>00:10</span>
          <span>13-02-2019</span>
        </time>
        <button aria-label="Notifications" className="ml-[27px] mr-[18px] mt-2">
          <svg width="36" height="36" viewBox="0 0 36 36" fontFamily="Open Sans">
            <path d="M0 0h24v20H13l-4 6v-6H0z" fill="#fff" />
            <path d="M5 5.500h14M5 9.500h14M5 13.500h8" stroke="#111" strokeWidth="1.400" />
            <circle cx="24" cy="24" r="11.500" fill="#25282d" stroke="#8f8f8f" />
            <text x="24" y="29.500" textAnchor="middle" fontSize="16" fill="#fff">1</text>
          </svg>
        </button>
        <span className="mr-[7px] h-full w-px bg-[#6b6f74]" />
      </div>
    </footer>
  );
}

export default function App() {
  return (
    <div className="flex h-screen flex-col overflow-hidden bg-[#f1f1f1] font-['Liberation_Sans',Arial,sans-serif]">
      <TitleBar />
      <TabBar />
      <QuickBar />
      <main className="relative min-h-0 flex-1">
        <ModelCanvas />
        <ViewCube />
        <div className="relative flex h-full flex-col pb-[7px] pt-[6px]">
          <Ribbon />
          <div className="grid min-h-0 flex-1 grid-cols-[1fr_auto_1fr] px-[6px]">
            <div className="flex w-[450px] flex-col">
              <Browser />
              <Comments />
            </div>
            <NavBar />
            <SketchPalette />
          </div>
        </div>
      </main>
      <Timeline />
      <Taskbar />
    </div>
  );
}
